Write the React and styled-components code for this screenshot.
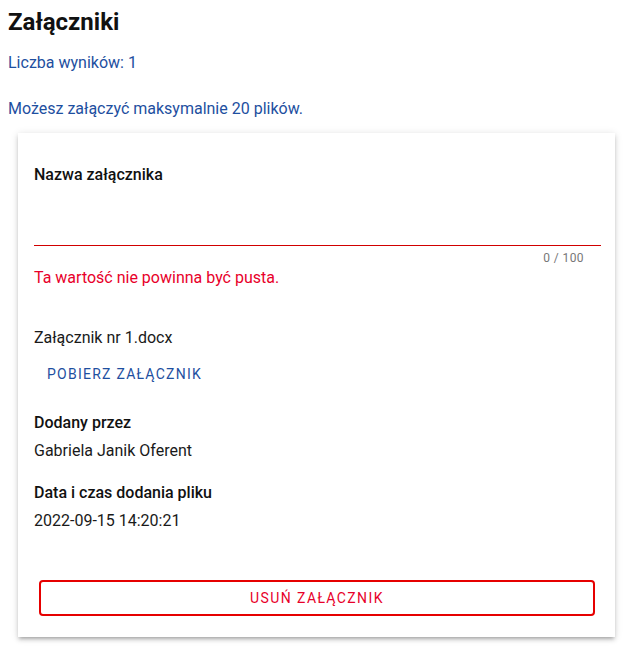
import React from "react";
import styled, { createGlobalStyle } from "styled-components";

const Global = createGlobalStyle`
  body { margin: 0; background: #fff; font-family: Roboto, "Noto Sans", sans-serif; color: #1a1a1a; }
`;

const Page = styled.div`
  padding: 8px 10px 14px 8px;
`;

const Title = styled.h1`
  margin: 0;
  font-size: 24px;
  line-height: 28px;
  font-weight: 700;
  color: #111;
`;

const Info = styled.p`
  margin: ${(p) => p.$mt}px 0 0 0;
  font-size: 16px;
  line-height: 24px;
  color: #1e4fa0;
`;

const Card = styled.section`
  margin: 12px 0 0 10px;
  background: #fff;
  box-shadow: 0 3px 3px -2px rgba(0,0,0,0.2), 0 3px 4px 0 rgba(0,0,0,0.14), 0 1px 8px 0 rgba(0,0,0,0.12);
  padding: 30px 14px 21px 16px;
  display: flex;
  flex-direction: column;
`;

const Label = styled.div`
  font-size: 16px;
  line-height: 24px;
  font-weight: 500;
  color: #111;
`;

const Field = styled.div`
  height: 58px;
  border-bottom: 1px solid #d10000;
`;

const Counter = styled.div`
  text-align: right;
  font-size: 12px;
  letter-spacing: 0.4px;
  line-height: 14px;
  color: #777;
  padding: 5px 17px 0 0;
`;

const Error = styled.div`
  margin-top: 3px;
  font-size: 16px;
  line-height: 20px;
  color: #e8002a;
`;

const FileName = styled.div`
  margin-top: 38px;
  font-size: 16px;
  line-height: 24px;
  color: #1a1a1a;
`;

const TextButton = styled.button`
  align-self: flex-start;
  margin-top: 12px;
  padding: 0 13px;
  height: 24px;
  border: none;
  background: none;
  font-family: inherit;
  font-size: 14px;
  letter-spacing: 1.25px;
  color: #1e4fa0;
  text-transform: uppercase;
  cursor: pointer;
`;

const Meta = styled.div`
  margin-top: ${(p) => p.$mt}px;
  display: flex;
  flex-direction: column;
  gap: 4px;
`;

const Value = styled.div`
  font-size: 16px;
  line-height: 24px;
  color: #1a1a1a;
`;

const DangerButton = styled.button`
  margin: 47px 6px 0 5px;
  height: 36px;
  border: 2px solid #e60000;
  border-radius: 4px;
  background: #fff;
  font-family: inherit;
  font-size: 14px;
  letter-spacing: 1.4px;
  color: #e8002a;
  text-transform: uppercase;
  cursor: pointer;
`;

export default function App() {
  return (
    <>
      <Global />
      <Page>
        <Title>Załączniki</Title>
        <Info $mt={15}>Liczba wyników: 1</Info>
        <Info $mt={22}>Możesz załączyć maksymalnie 20 plików.</Info>
        <Card>
          <Label>Nazwa załącznika</Label>
          <Field />
          <Counter>0 / 100</Counter>
          <Error>Ta wartość nie powinna być pusta.</Error>
          <FileName>Załącznik nr 1.docx</FileName>
          <TextButton>Pobierz załącznik</TextButton>
          <Meta $mt={25}>
            <Label>Dodany przez</Label>
            <Value>Gabriela Janik Oferent</Value>
          </Meta>
          <Meta $mt={18}>
            <Label>Data i czas dodania pliku</Label>
            <Value>2022-09-15 14:20:21</Value>
          </Meta>
          <DangerButton>Usuń załącznik</DangerButton>
        </Card>
      </Page>
    </>
  );
}
